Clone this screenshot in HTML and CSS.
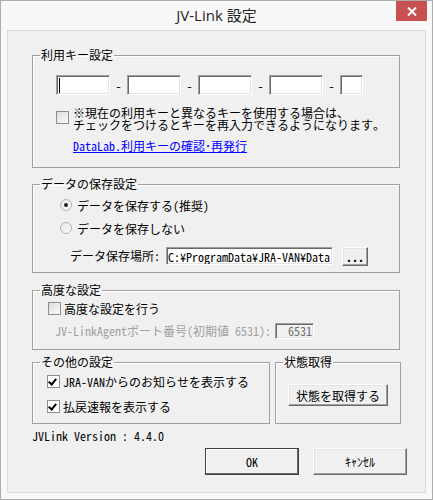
FILE: index.html
```html
<!DOCTYPE html>
<html lang="ja">
<head>
    <meta charset="UTF-8">
    <title>JV-Link 設定</title>
    <link rel="stylesheet" href="styles.css">
</head>
<body>

<div class="window">
    <!-- Title bar -->
    <div class="titlebar">
        <span class="title">JV-Link 設定</span>
        <button class="close" type="button" aria-label="閉じる">
            <svg width="10" height="9" viewBox="0 0 10 9">
                <path d="M1 0.5 L9 8.5 M9 0.5 L1 8.5" stroke="#fff" stroke-width="2" fill="none"/>
            </svg>
        </button>
    </div>

    <div class="client">
        <!-- Key settings -->
        <fieldset class="group key-group">
            <legend>利用キー設定</legend>
            <div class="group-body key-body">
                <div class="key-row">
                    <input class="field key caret" type="text">
                    <span class="sep">-</span>
                    <input class="field key" type="text">
                    <span class="sep">-</span>
                    <input class="field key" type="text">
                    <span class="sep">-</span>
                    <input class="field key" type="text">
                    <span class="sep">-</span>
                    <input class="field key short" type="text">
                </div>
                <label class="note-row">
                    <span class="check"></span>
                    <span class="note">
                        <span class="note-line">※現在の利用キーと異なるキーを使用する場合は、</span>
                        <span class="note-line">チェックをつけるとキーを再入力できるようになります。</span>
                    </span>
                </label>
                <a class="link" href="#">DataLab.利用キーの確認･再発行</a>
            </div>
        </fieldset>

        <!-- Data save settings -->
        <fieldset class="group save-group">
            <legend>データの保存設定</legend>
            <div class="group-body save-body">
                <label class="radio-row"><span class="radio on"></span>データを保存する(推奨)</label>
                <label class="radio-row second"><span class="radio"></span>データを保存しない</label>
                <div class="path-row">
                    <span class="path-label">データ保存場所:</span>
                    <input class="field path" type="text" value="C:¥ProgramData¥JRA-VAN¥Data">
                    <button class="btn browse" type="button">...</button>
                </div>
            </div>
        </fieldset>

        <!-- Advanced -->
        <fieldset class="group adv-group">
            <legend>高度な設定</legend>
            <div class="group-body adv-body">
                <label class="check-row"><span class="check"></span>高度な設定を行う</label>
                <div class="port-row">
                    <span class="port-label">JV-LinkAgentポート番号(初期値 6531):</span>
                    <input class="field port" type="text" value="6531" disabled>
                </div>
            </div>
        </fieldset>

        <div class="bottom-groups">
            <fieldset class="group other-group">
                <legend>その他の設定</legend>
                <div class="group-body other-body">
                    <label class="check-row"><span class="check on"></span>JRA-VANからのお知らせを表示する</label>
                    <label class="check-row second"><span class="check on"></span>払戻速報を表示する</label>
                </div>
            </fieldset>
            <fieldset class="group status-group">
                <legend>状態取得</legend>
                <div class="group-body status-body">
                    <button class="btn status" type="button">状態を取得する</button>
                </div>
            </fieldset>
        </div>

        <div class="version">JVLink Version : 4.4.0</div>

        <div class="actions">
            <button class="btn default" type="button">OK</button>
            <button class="btn" type="button">ｷｬﾝｾﾙ</button>
        </div>
    </div>
</div>

</body>
</html>
```

FILE: styles.css
```css
/* Window frame */
body {
    margin: 0;
    font-family: "Noto Sans Mono CJK JP", "Noto Sans CJK JP", monospace;
    font-size: 12px;
    font-weight: 300;
    color: #000;
}

.window {
    width: 433px;
    height: 500px;
    box-sizing: border-box;
    border: 1px solid #adadad;
    background-color: #f8f8f8;
}

.titlebar {
    position: relative;
    height: 29px;
    text-align: center;
}

.title {
    font-family: "Open Sans", "Noto Sans CJK JP", sans-serif;
    font-size: 15px;
    font-weight: 400;
    line-height: 29px;
    color: #1f1f1f;
}

.close {
    position: absolute;
    top: 0;
    right: 5px;
    width: 31px;
    height: 20px;
    padding: 0;
    border: none;
    background-color: #c75050;
    display: flex;
    align-items: center;
    justify-content: center;
}

.client {
    margin: 0 6px;
    height: 463px;
    box-sizing: border-box;
    border: 1px solid #dadada;
    background-color: #f0f0f0;
    padding: 17px 0 0 24px;
}

/* Group boxes */
.group {
    margin: 0;
    padding: 0;
    min-width: 0;
    width: 368px;
    box-sizing: border-box;
    border: 1px solid #a0a0a0;
    box-shadow: inset 1px 1px 0 #fff;
}

.group legend {
    margin-left: 7px;
    padding: 0 1px;
    line-height: 14px;
}

.key-group { height: 120px; }
.save-group { height: 96px; margin-top: 9px; }
.adv-group { height: 67px; margin-top: 10px; }

.bottom-groups {
    display: flex;
    gap: 5px;
    margin-top: 5px;
}

.other-group { width: 238px; height: 69px; }
.status-group { width: 126px; height: 69px; }

/* Inputs */
.field {
    box-sizing: border-box;
    margin: 0;
    border: 1px solid;
    border-color: #a0a0a0 #fff #fff #a0a0a0;
    box-shadow: inset 1px 1px 0 #696969, inset -1px -1px 0 #e3e3e3;
    background-color: #fff;
    font: inherit;
    color: #000;
    padding: 0 1px;
    outline: none;
}

.key-body { padding: 13px 0 0 23px; }

.key-row {
    display: flex;
    align-items: center;
    height: 20px;
}

.key {
    width: 54px;
    height: 20px;
}

.key.caret {
    background: #fff linear-gradient(#000, #000) no-repeat 2px 2px / 1px 15px;
}

.key.short { width: 23px; }

.sep {
    width: 17px;
    text-align: center;
}

.note-row {
    display: flex;
    align-items: flex-start;
    margin-top: 12px;
}

.note-row .check { margin-top: 4px; margin-right: 4px; }

.note-line {
    display: block;
    height: 12px;
    line-height: 12px;
}

.link {
    display: inline-block;
    margin: 9px 0 0 17px;
    line-height: 12px;
    color: #0000ff;
}

/* Checkbox and radio */
.check {
    width: 13px;
    height: 13px;
    box-sizing: border-box;
    border: 1px solid #8f8f8f;
    background: linear-gradient(135deg, #dcdcdc, #fafafa);
    flex: none;
    position: relative;
}

.check.on {
    background: #fff;
}

.check.on::after {
    content: "";
    position: absolute;
    left: 2px;
    top: 1px;
    width: 3px;
    height: 6px;
    border: solid #000;
    border-width: 0 2px 2px 0;
    transform: rotate(40deg);
}

.radio {
    width: 12px;
    height: 12px;
    box-sizing: border-box;
    border: 1px solid #b4b4b4;
    border-radius: 50%;
    background: linear-gradient(135deg, #e6e6e6, #fdfdfd);
    margin-right: 5px;
    flex: none;
    position: relative;
}

.radio.on::after {
    content: "";
    position: absolute;
    left: 3px;
    top: 3px;
    width: 4px;
    height: 4px;
    border-radius: 50%;
    background-color: #222;
}

.check-row, .radio-row {
    display: flex;
    align-items: center;
    height: 16px;
}

.check-row .check { margin-right: 3px; }

/* Save settings */
.save-body { padding: 6px 0 0 27px; }

.radio-row.second { margin-top: 7px; }

.path-row {
    display: flex;
    align-items: flex-start;
    margin: 11px 0 0 10px;
}

.path-label {
    width: 96px;
    line-height: 18px;
}

.path {
    width: 167px;
    height: 18px;
}

/* Buttons */
.btn {
    box-sizing: border-box;
    margin: 0;
    padding: 0;
    font: inherit;
    color: #000;
    background-color: #f0f0f0;
    border: 1px solid;
    border-color: #fff #696969 #696969 #fff;
    box-shadow: inset -1px -1px 0 #a0a0a0, inset 1px 1px 0 #e3e3e3;
}

.browse {
    width: 26px;
    height: 19px;
    margin-left: 9px;
    line-height: 12px;
    font-weight: 700;
}

/* Advanced */
.adv-body { padding: 3px 0 0 15px; }

.port-row {
    display: flex;
    align-items: center;
    margin: 6px 0 0 7px;
}

.port-label {
    width: 220px;
    color: #a0a0a0;
}

.port {
    width: 39px;
    height: 16px;
    text-align: right;
    background-color: #f0f0f0;
    color: #6d6d6d;
}

/* Other / status */
.other-body { padding: 4px 0 0 14px; }

.check-row.second { margin-top: 9px; }

.status-body { padding: 15px 0 0 12px; }

.status {
    width: 100px;
    height: 22px;
}

/* Footer */
.version {
    margin-top: 6px;
    line-height: 12px;
}

.actions {
    display: flex;
    justify-content: flex-end;
    gap: 14px;
    margin: 6px 18px 0 0;
}

.actions .btn {
    width: 94px;
    height: 27px;
}

.actions .btn.default {
    border-color: #404040;
    box-shadow: inset -1px -1px 0 #696969, inset 1px 1px 0 #fff;
}
```
